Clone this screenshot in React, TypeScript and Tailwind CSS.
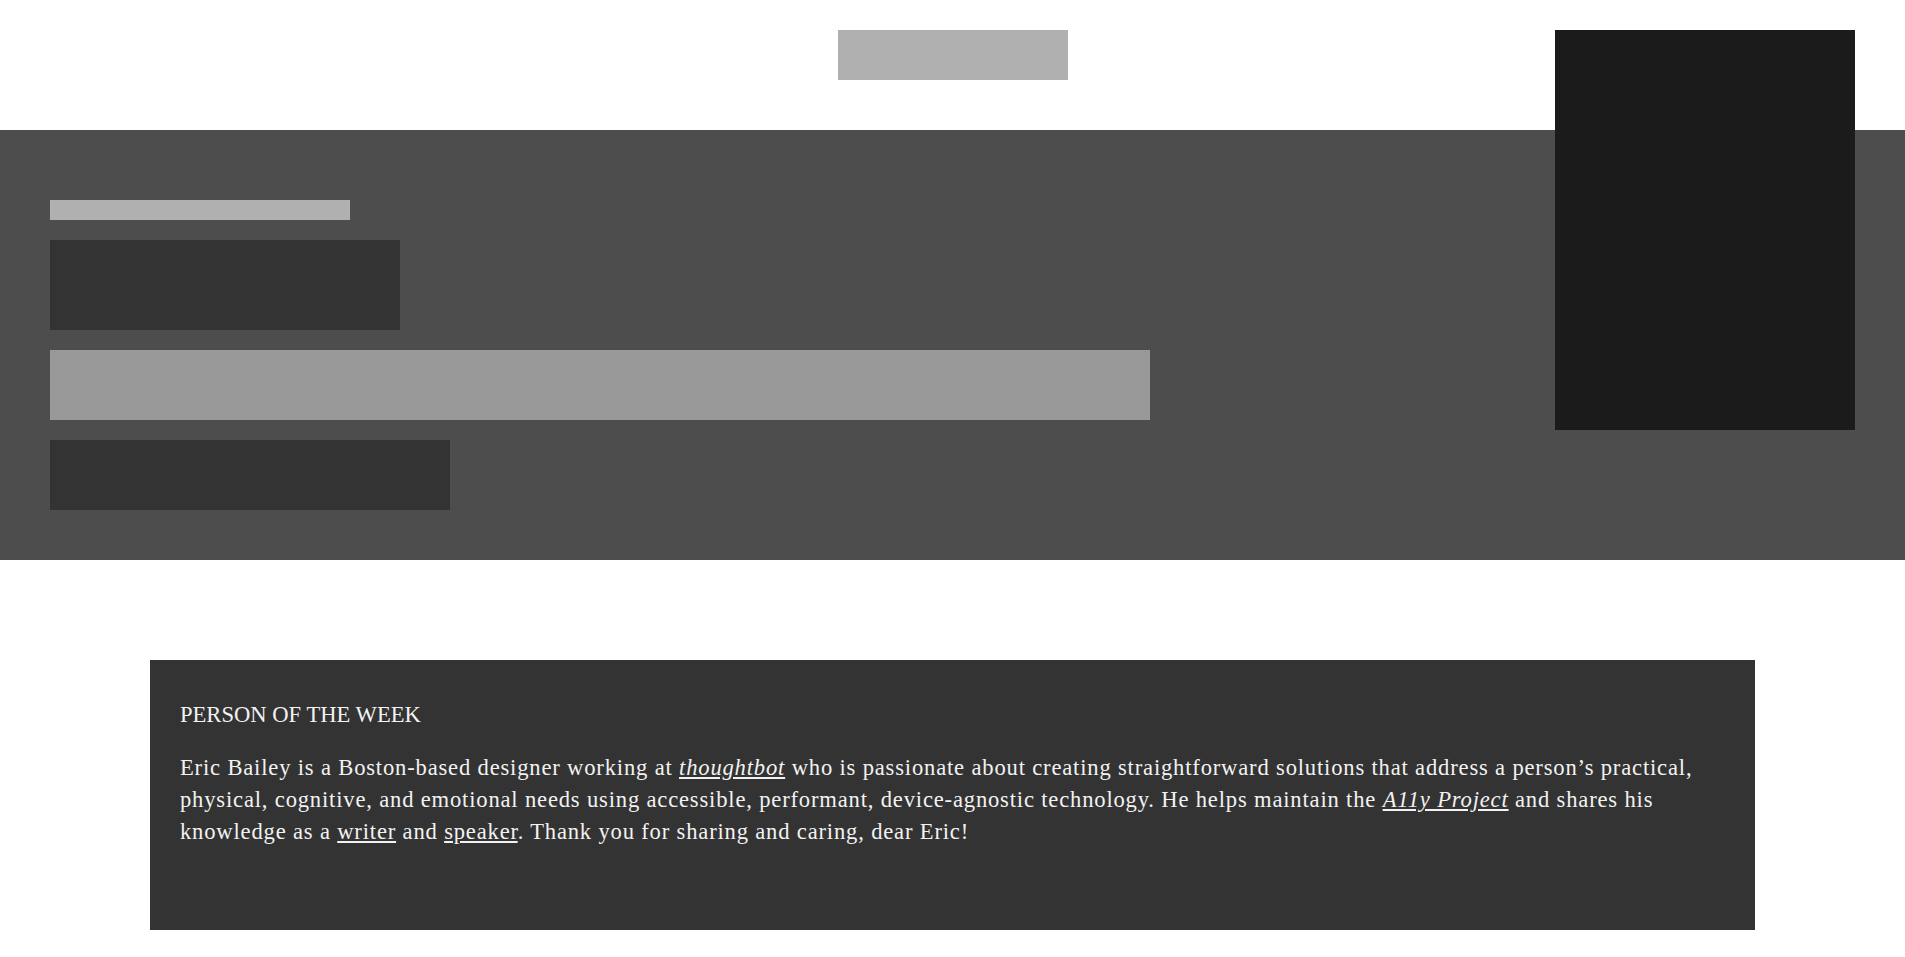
import React from "react";

export default function App() {
  return (
    <div className="relative min-h-screen bg-white font-['Liberation_Serif',serif]">
      {/* Header */}
      <header className="flex h-[130px] justify-center pt-[30px]">
        <div className="h-[50px] w-[230px] bg-[#b0b0b0]" />
      </header>

      {/* Side panel over header and hero */}
      <div className="absolute right-[50px] top-[30px] h-[400px] w-[300px] bg-[#1b1b1b]" />

      {/* Hero */}
      <section className="flex flex-col gap-5 bg-[#4d4d4d] px-[50px] pb-[50px] pt-[70px]">
        <div className="h-5 w-[300px] bg-[#b0b0b0]" />
        <div className="h-[90px] w-[350px] bg-[#333333]" />
        <div className="h-[70px] w-[1100px] bg-[#999999]" />
        <div className="h-[70px] w-[400px] bg-[#333333]" />
      </section>

      {/* Person of the week */}
      <main className="px-[150px] pt-[100px] pb-[27px]">
        <div className="h-[270px] bg-[#333333] px-[30px] pt-[39px] text-[#f2f2f2]">
          <h2 className="mb-[21px] text-[22.6px] uppercase leading-[32px]">Person of the week</h2>
          <p className="text-[22.6px] leading-[32px] tracking-[0.82px]">
            Eric Bailey is a Boston-based designer working at{" "}
            <a href="#" className="italic underline">thoughtbot</a> who is passionate about creating
            straightforward solutions that address a person’s practical, physical, cognitive, and
            emotional needs using accessible, performant, device-agnostic technology. He helps
            maintain the <a href="#" className="italic underline">A11y Project</a> and shares his
            knowledge as a <a href="#" className="underline">writer</a> and{" "}
            <a href="#" className="underline">speaker</a>. Thank you for sharing and caring, dear Eric!
          </p>
        </div>
      </main>
    </div>
  );
}
